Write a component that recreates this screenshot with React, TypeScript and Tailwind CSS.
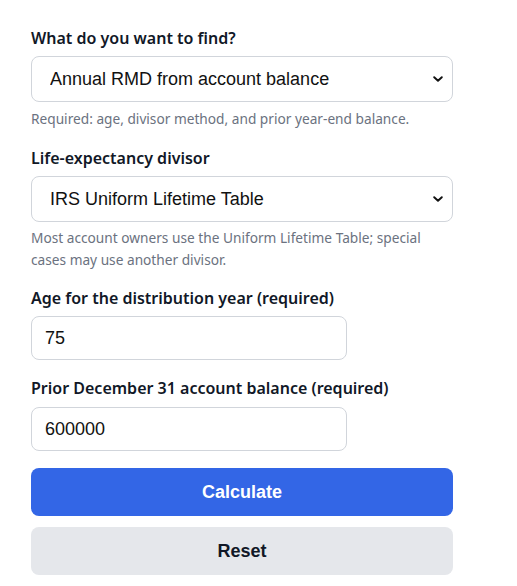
import React, { useState } from 'react';

const Chevron: React.FC = () => (
    <svg
        className="pointer-events-none absolute right-[10px] top-1/2 -translate-y-1/2"
        width="10"
        height="6"
        viewBox="0 0 10 6"
        fill="none"
    >
        <path d="M1.2 1.2 L5 4.8 L8.8 1.2" stroke="#111" strokeWidth="1.9" strokeLinecap="round" strokeLinejoin="round" />
    </svg>
);

const Label: React.FC<{ htmlFor: string; className?: string; children: React.ReactNode }> = ({ htmlFor, className = 'mb-[7px]', children }) => (
    <label htmlFor={htmlFor} className={`block text-[16px] leading-[22px] font-semibold text-[#111827] ${className}`}>
        {children}
    </label>
);

const Help: React.FC<{ className: string; children: React.ReactNode }> = ({ className, children }) => (
    <p className={`text-[13.7px] leading-[22px] text-[#6b7280] ${className}`}>{children}</p>
);

const SelectField: React.FC<{ id: string; value: string; options: string[]; onChange: (v: string) => void }> = ({ id, value, options, onChange }) => (
    <div className="relative">
        <select
            id={id}
            value={value}
            onChange={e => onChange(e.target.value)}
            className="block w-full h-[46px] appearance-none rounded-[8px] border border-[#d1d5db] bg-white pl-[18px] pr-8 text-[18px] text-[#111] font-['Liberation_Sans',Arial,sans-serif] outline-none"
        >
            {options.map(o => (
                <option key={o} value={o}>{o}</option>
            ))}
        </select>
        <Chevron />
    </div>
);

const inputCls =
    "block w-[316px] h-[44px] rounded-[8px] border border-[#d1d5db] px-[13px] text-[18px] text-[#111] font-['Liberation_Sans',Arial,sans-serif] outline-none";

export default function App() {
    const [goal, setGoal] = useState('Annual RMD from account balance');
    const [divisor, setDivisor] = useState('IRS Uniform Lifetime Table');
    const [age, setAge] = useState('75');
    const [balance, setBalance] = useState('600000');

    const reset = () => {
        setGoal('Annual RMD from account balance');
        setDivisor('IRS Uniform Lifetime Table');
        setAge('75');
        setBalance('600000');
    };

    return (
        <div className="min-h-screen bg-white font-['Noto_Sans','Open_Sans',sans-serif]">
            <form className="w-[422px] ml-[31px] pt-[27px]" onSubmit={e => e.preventDefault()}>
                <Label htmlFor="goal">What do you want to find?</Label>
                <SelectField
                    id="goal"
                    value={goal}
                    onChange={setGoal}
                    options={['Annual RMD from account balance', 'Required account balance', 'Divisor from RMD']}
                />
                <Help className="mt-[6px]">Required: age, divisor method, and prior year-end balance.</Help>

                <div className="mt-[17px]">
                    <Label htmlFor="divisor">Life-expectancy divisor</Label>
                    <SelectField
                        id="divisor"
                        value={divisor}
                        onChange={setDivisor}
                        options={['IRS Uniform Lifetime Table', 'IRS Joint Life Table', 'Custom divisor']}
                    />
                    <Help className="mt-[5px]">Most account owners use the Uniform Lifetime Table; special cases may use another divisor.</Help>
                </div>

                <div className="mt-[16px]">
                    <Label htmlFor="age">Age for the distribution year (required)</Label>
                    <input id="age" value={age} onChange={e => setAge(e.target.value)} className={inputCls} />
                </div>

                <div className="mt-[17px]">
                    <Label htmlFor="balance" className="mb-[8px]">Prior December 31 account balance (required)</Label>
                    <input id="balance" value={balance} onChange={e => setBalance(e.target.value)} className={inputCls} />
                </div>

                <button
                    type="submit"
                    className="mt-[17px] block w-full h-[48px] rounded-[8px] bg-[#3366e6] text-white text-[18px] font-bold font-['Liberation_Sans',Arial,sans-serif]"
                >
                    Calculate
                </button>
                <button
                    type="button"
                    onClick={reset}
                    className="mt-[11px] block w-full h-[48px] rounded-[8px] bg-[#e5e7eb] text-[#111827] text-[18px] font-bold font-['Liberation_Sans',Arial,sans-serif]"
                >
                    Reset
                </button>
            </form>
        </div>
    );
}
